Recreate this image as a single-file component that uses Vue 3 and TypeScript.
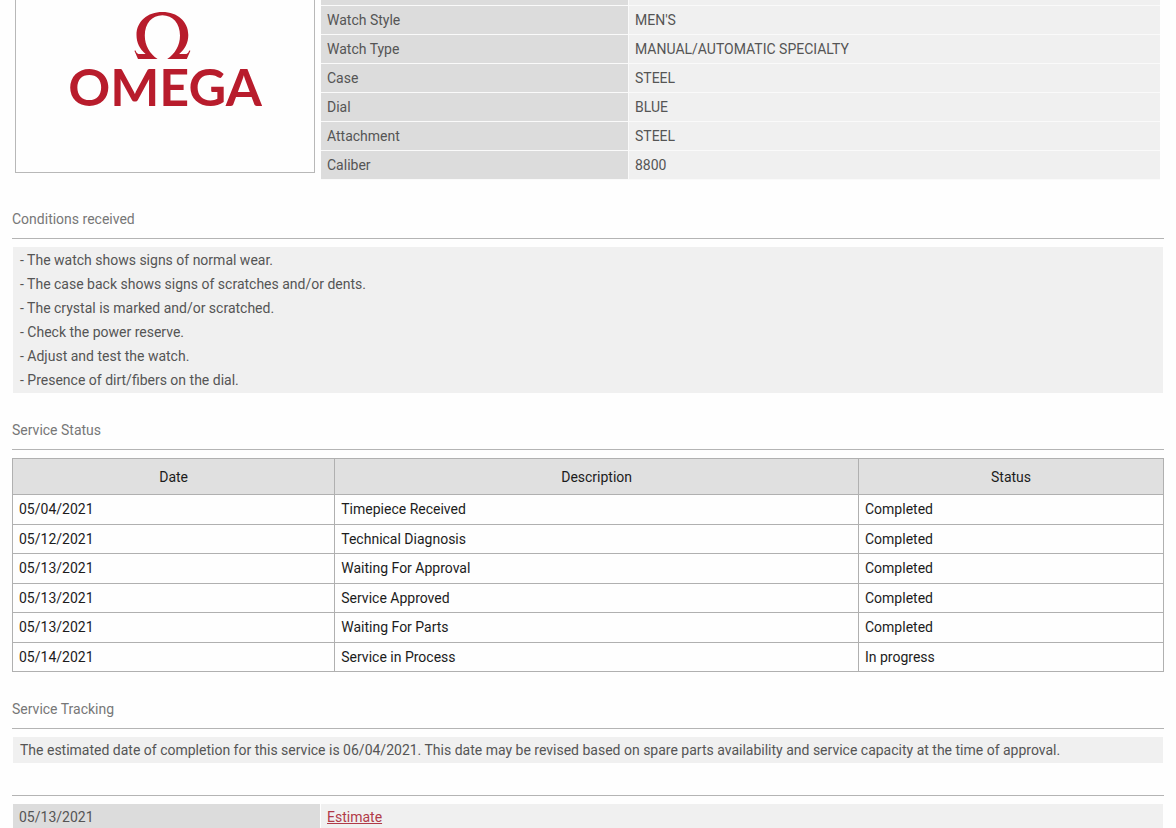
<script setup lang="ts">
interface Spec {
  label: string
  value: string
}

interface Step {
  date: string
  description: string
  status: string
}

const specs: Spec[] = [
  { label: 'Watch Style', value: "MEN'S" },
  { label: 'Watch Type', value: 'MANUAL/AUTOMATIC SPECIALTY' },
  { label: 'Case', value: 'STEEL' },
  { label: 'Dial', value: 'BLUE' },
  { label: 'Attachment', value: 'STEEL' },
  { label: 'Caliber', value: '8800' },
]

const conditions: string[] = [
  'The watch shows signs of normal wear.',
  'The case back shows signs of scratches and/or dents.',
  'The crystal is marked and/or scratched.',
  'Check the power reserve.',
  'Adjust and test the watch.',
  'Presence of dirt/fibers on the dial.',
]

const steps: Step[] = [
  { date: '05/04/2021', description: 'Timepiece Received', status: 'Completed' },
  { date: '05/12/2021', description: 'Technical Diagnosis', status: 'Completed' },
  { date: '05/13/2021', description: 'Waiting For Approval', status: 'Completed' },
  { date: '05/13/2021', description: 'Service Approved', status: 'Completed' },
  { date: '05/13/2021', description: 'Waiting For Parts', status: 'Completed' },
  { date: '05/14/2021', description: 'Service in Process', status: 'In progress' },
]
</script>

<template>
  <main class="page">
    <section class="watch">
      <div class="brand">
        <svg class="logo" viewBox="0 0 200 120" role="img" aria-label="Omega">
          <path
            class="mark"
            d="M70.6 42.4C71.4 45 72.6 46 75 46H80.6C74.6 41 71.5 34.4 71.5 27C71.5 13.4 82.4 4 97.4 4C112.4 4 123.3 13.4 123.3 27C123.3 34.4 120.2 41 114.2 46H119.8C122.2 46 123.4 45 124.2 42.4L125.4 42.8L121.8 51H102.2C110 45.6 115 37.6 115 27.4C115 15.4 107.8 7.2 97.4 7.2C87 7.2 79.8 15.4 79.8 27.4C79.8 37.6 84.8 45.6 92.6 51H73L69.4 42.8Z"
          />
          <text class="wordmark" x="100" y="98" text-anchor="middle">OMEGA</text>
        </svg>
      </div>
      <table class="specs">
        <tbody>
          <tr class="cut"><td></td><td></td></tr>
          <tr v-for="spec in specs" :key="spec.label">
            <th scope="row">{{ spec.label }}</th>
            <td>{{ spec.value }}</td>
          </tr>
        </tbody>
      </table>
    </section>

    <section>
      <h2>Conditions received</h2>
      <div class="panel">
        <p v-for="item in conditions" :key="item">- {{ item }}</p>
      </div>
    </section>

    <section>
      <h2>Service Status</h2>
      <table class="steps">
        <thead>
          <tr>
            <th class="date" scope="col">Date</th>
            <th scope="col">Description</th>
            <th class="status" scope="col">Status</th>
          </tr>
        </thead>
        <tbody>
          <tr v-for="step in steps" :key="step.description">
            <td>{{ step.date }}</td>
            <td>{{ step.description }}</td>
            <td>{{ step.status }}</td>
          </tr>
        </tbody>
      </table>
    </section>

    <section>
      <h2>Service Tracking</h2>
      <div class="panel">
        <p>
          The estimated date of completion for this service is 06/04/2021. This date may be revised
          based on spare parts availability and service capacity at the time of approval.
        </p>
      </div>
    </section>

    <section class="documents">
      <div class="document">
        <time datetime="2021-05-13">05/13/2021</time>
        <div class="file"><a href="#estimate">Estimate</a></div>
      </div>
    </section>
  </main>
</template>

<style>
body {
  margin: 0;
  background: #fefefe;
}
</style>

<style scoped>
.page {
  height: 100vh;
  padding: 0 12px;
  box-sizing: border-box;
  overflow: hidden;
  color: #555;
  font: 400 14px/24px Roboto, sans-serif;
}

.watch {
  display: flex;
  align-items: flex-start;
  gap: 6px;
  padding: 0 4px 2px 3px;
}

.brand {
  flex: 0 0 300px;
  box-sizing: border-box;
  height: 173px;
  padding: 8px 49px 0;
  border: 1px solid #b8b8b8;
  border-top: 0;
}

.logo {
  display: block;
  width: 100%;
}

.mark,
.wordmark {
  fill: #b81c2c;
}

.wordmark {
  font: 700 52px Lato, sans-serif;
}

.specs {
  flex: 1;
  table-layout: fixed;
  border-collapse: collapse;
}

.specs th,
.specs td {
  height: 28px;
  padding: 0 6px;
  border-bottom: 1px solid #fafafa;
  background: #f0f0f0;
  font-weight: 400;
  text-align: left;
}

.specs th,
.specs .cut td:first-child {
  width: 295px;
  border-right: 1px solid #fafafa;
  background: #dcdcdc;
}

.specs .cut td {
  height: 5px;
}

h2 {
  margin: 0 0 8px;
  padding: 25px 0 7px;
  border-bottom: 1px solid #b4b4b4;
  color: #777;
  font-size: 14px;
  font-weight: 400;
  line-height: 24px;
}

.panel {
  margin: 0 1px;
  padding: 1px 7px;
  background: #f0f0f0;
}

.panel p {
  margin: 0;
}

.steps {
  width: 100%;
  height: 214px;
  table-layout: fixed;
  border-collapse: collapse;
  color: #1c1c1c;
}

.steps th,
.steps td {
  box-sizing: border-box;
  padding: 0 6px;
  border: 1px solid #b0b0b0;
  text-align: left;
}

.steps th {
  height: 36px;
  background: #e0e0e0;
  font-weight: 400;
  text-align: center;
}

.steps .date {
  width: 28%;
}

.steps .status {
  width: 26.5%;
}

.documents {
  margin-top: 32px;
  padding-top: 8px;
  border-top: 1px solid #b4b4b4;
}

.document {
  display: grid;
  grid-template-columns: 307px 1fr;
  gap: 1px;
  margin: 0 1px;
  line-height: 26px;
}

.document time {
  padding: 0 6px;
  background: #dcdcdc;
}

.file {
  padding: 0 6px;
  background: #f0f0f0;
}

.file a {
  color: #b03a48;
  text-decoration: underline;
}
</style>
